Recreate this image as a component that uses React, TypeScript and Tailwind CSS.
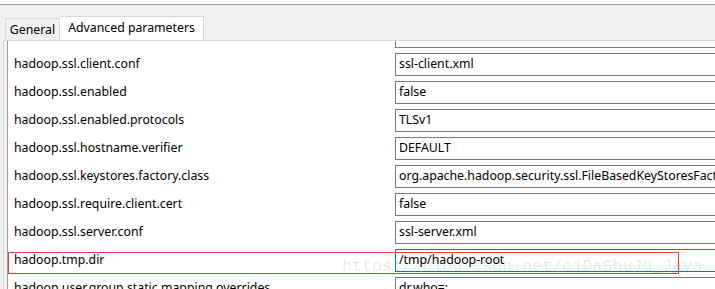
import React from "react";

const rows: { k: string; v: string; focus?: boolean }[] = [
  { k: "", v: "" },
  { k: "hadoop.ssl.client.conf", v: "ssl-client.xml" },
  { k: "hadoop.ssl.enabled", v: "false" },
  { k: "hadoop.ssl.enabled.protocols", v: "TLSv1" },
  { k: "hadoop.ssl.hostname.verifier", v: "DEFAULT" },
  { k: "hadoop.ssl.keystores.factory.class", v: "org.apache.hadoop.security.ssl.FileBasedKeyStoresFactory" },
  { k: "hadoop.ssl.require.client.cert", v: "false" },
  { k: "hadoop.ssl.server.conf", v: "ssl-server.xml" },
  { k: "hadoop.tmp.dir", v: "/tmp/hadoop-root", focus: true },
  { k: "hadoop.user.group.static.mapping.overrides", v: "dr.who=;" },
];

export default function App() {
  return (
    <div
      className="relative w-[715px] h-[289px] overflow-hidden bg-[#f0f0f0] text-black"
      style={{ fontFamily: '"Noto Sans", "Open Sans", sans-serif' }}
    >
      <div className="h-[4px] bg-white" />
      <div className="h-px bg-[#a0a0a0]" />
      {/* tab strip */}
      <div className="h-[35px] flex items-end pl-[5px]">
        <div className="h-[22px] w-[55px] border border-b-0 border-[#d9d9d9] bg-[#f0f0f0] text-[12.3px] leading-none flex items-start justify-center pt-[5px]">
          General
        </div>
        <div className="h-[24px] w-[144px] border border-b-0 border-l-0 border-[#d9d9d9] bg-white text-[12.3px] leading-none flex items-start justify-center pt-[5px]">
          Advanced parameters
        </div>
      </div>
      {/* panel */}
      <div className="h-[249px] ml-[3px] border-t border-l border-[#d9d9d9] bg-[#f0f0f0] pl-[3px]">
        <div className="h-full bg-white border-l border-[#a0a0a0] overflow-hidden">
          <div className="mt-[-16px] flex flex-col">
            {rows.map((r, i) => (
              <div key={i} className="h-[28px] flex items-start shrink-0">
                <div className="w-[387px] shrink-0 h-[23px] pl-[6px] flex items-center text-[12.3px] whitespace-nowrap overflow-hidden">
                  {r.k}
                </div>
                <div
                  className={
                    "w-[400px] shrink-0 h-[23px] border pl-[3px] flex items-center text-[12.3px] whitespace-nowrap overflow-hidden " +
                    (r.focus ? "border-[#0078d7]" : "border-[#7a7a7a]")
                  }
                >
                  {r.v}
                </div>
              </div>
            ))}
          </div>
        </div>
      </div>
      {/* red annotation box */}
      <div className="absolute left-[8px] top-[252px] w-[671px] h-[22px] border border-[#f0393c] pointer-events-none" />
      {/* watermark */}
      <div
        className="absolute left-[342px] top-[259px] text-[16.7px] leading-none text-[#000000]/10 whitespace-nowrap pointer-events-none"
        style={{ fontFamily: '"Liberation Mono", monospace' }}
      >
        https://blog.csdn.net/cjDaShuJu_Java
      </div>
    </div>
  );
}
